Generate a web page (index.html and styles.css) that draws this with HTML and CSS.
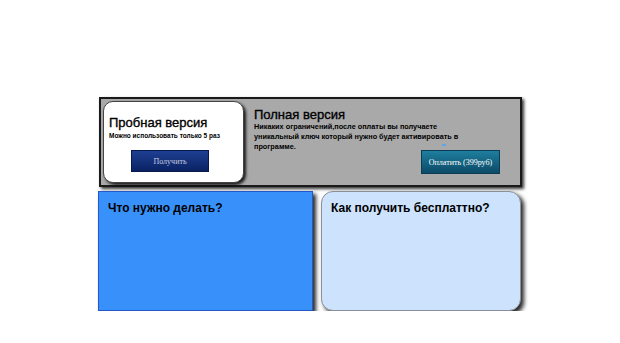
FILE: index.html
```html
<!DOCTYPE html>
<html lang="ru">
<head>
<meta charset="utf-8">
<title>Версии</title>
<link rel="stylesheet" href="styles.css">
</head>
<body>
<div class="wrap">
  <div class="top">
    <div class="trial">
      <h2 class="title">Пробная версия</h2>
      <p class="note">Можно использовать только 5 раз</p>
      <button class="btn btn-get">Получить</button>
    </div>
    <div class="full">
      <h2 class="title">Полная версия</h2>
      <p class="desc">Никаких ограничений,после оплаты вы получаете уникальный ключ который нужно будет активировать в программе.</p>
      <span class="mark"></span>
      <button class="btn btn-pay">Оплатить (399руб)</button>
    </div>
  </div>
  <div class="bottom">
    <div class="card card-blue"><h3 class="card-title">Что нужно делать?</h3></div>
    <div class="card card-light"><h3 class="card-title">Как получить бесплаттно?</h3></div>
  </div>
</div>
</body>
</html>
```
FILE: styles.css
```css
html, body {
  margin: 0;
  padding: 0;
  background: #ffffff;
}
body {
  font-family: "Liberation Sans", Arial, sans-serif;
  color: #000;
}
.wrap {
  width: 424px;
  margin: 97px auto 0;
}
.top {
  box-sizing: border-box;
  height: 90px;
  margin-left: 1px;
  width: 423px;
  background: #a9a9a9;
  border: 2px solid #1a1a1a;
  box-shadow: 2px 2px 3px rgba(0,0,0,0.8);
  display: flex;
  padding: 2px;
}
.trial {
  box-sizing: border-box;
  width: 141px;
  height: 82px;
  background: #fff;
  border: 1px solid #444;
  border-radius: 10px;
  box-shadow: 2px 2px 3px rgba(0,0,0,0.85);
  padding: 13px 0 0 5px;
  display: flex;
  flex-direction: column;
}
.title {
  margin: 0;
  font-size: 13px;
  font-weight: normal;
  line-height: 15px;
  -webkit-text-stroke: 0.35px #000;
}
.note {
  margin: 2px 0 0;
  font-size: 6.5px;
  font-weight: bold;
  line-height: 8px;
}
.btn {
  border: none;
  color: #fff;
  font-family: "Liberation Serif", "Times New Roman", serif;
  font-size: 8px;
  padding: 0;
  cursor: pointer;
}
.btn-get {
  margin: 10px 0 0 22px;
  width: 78px;
  height: 22px;
  color: #c8cde0;
  background: linear-gradient(#1e3f92, #0a2263);
  border: 1px solid #08184a;
}
.full {
  position: relative;
  flex: 1;
  padding: 6px 0 0 10px;
  display: flex;
  flex-direction: column;
}
.desc {
  margin: 0;
  width: 206px;
  font-size: 7.3px;
  font-weight: bold;
  line-height: 10px;
}
.mark {
  position: absolute;
  left: 198px;
  top: 43px;
  width: 4px;
  height: 2px;
  background: #5fa6e6;
}
.btn-pay {
  align-self: flex-end;
  margin: -2px 18px 0 0;
  width: 79px;
  height: 24px;
  background: linear-gradient(#1f7e9e, #0b4a67);
  border: 1px solid #0a3c55;
}
.bottom {
  display: flex;
  gap: 8px;
  margin-top: 4px;
}
.card {
  box-sizing: border-box;
  height: 120px;
  padding: 9px 9px;
  box-shadow: 3px 3px 4px rgba(0,0,0,0.85);
}
.card-blue {
  width: 215px;
  background: #3891fb;
  border: 1px solid #2458c8;
}
.card-light {
  width: 200px;
  background: #cce2fd;
  border: 1px solid #8a8f98;
  border-radius: 12px;
}
.card-title {
  margin: 0;
  font-size: 12px;
  font-weight: bold;
  line-height: 14px;
}
```
